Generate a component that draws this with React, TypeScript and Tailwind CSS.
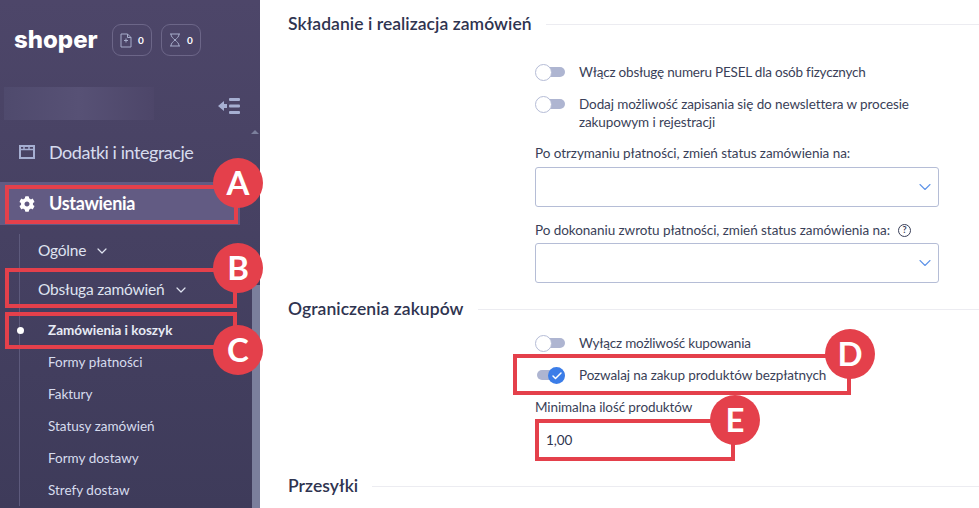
import { Check, ChevronDown } from 'lucide-react';
import { FaCog } from 'react-icons/fa';

const font = { fontFamily: 'Lato, "Noto Sans", sans-serif' };

function Toggle({ on = false }: { on?: boolean }) {
  return (
    <span className="relative mt-[1px] block h-[17px] w-[30px] shrink-0">
      <span className="absolute left-[2px] right-0 top-[3px] h-[10px] rounded-full bg-[#aeb5d1]" />
      {on ? (
        <span className="absolute right-0 top-0 flex h-[17px] w-[17px] items-center justify-center rounded-full bg-[#3b7de8]">
          <Check size={12} strokeWidth={3} className="text-white" />
        </span>
      ) : (
        <span className="absolute left-0 top-0 h-[17px] w-[17px] rounded-full border border-[#b5bcd6] bg-white" />
      )}
    </span>
  );
}

function Heading({ title }: { title: string }) {
  return (
    <div className="flex items-center">
      <h2 className="mr-[14px] text-[17.5px] leading-[24px] font-semibold tracking-[0.05px] text-[#2f3450]">{title}</h2>
      <div className="h-px flex-1 bg-[#ececf1]" />
    </div>
  );
}

function SelectBox() {
  return (
    <div className="flex h-[40px] w-[404px] items-center justify-end rounded-[3px] border border-[#b5bdd6] bg-white pr-[3px]">
      <ChevronDown size={20} strokeWidth={1.3} className="text-[#5f94e8]" />
    </div>
  );
}

function Mark({ letter, className }: { letter: string; className: string }) {
  return (
    <div className={`absolute flex h-[50px] w-[50px] items-center justify-center rounded-full bg-[#e4404b] text-[33px] font-bold text-white ${className}`}>
      {letter}
    </div>
  );
}

function Frame({ className }: { className: string }) {
  return <div className={`absolute border-[4px] border-[#e4404b] ${className}`} />;
}

export default function App() {
  const subItems = ['Formy płatności', 'Faktury', 'Statusy zamówień', 'Formy dostawy', 'Strefy dostaw'];

  return (
    <div className="relative flex h-[508px] w-[979px] overflow-hidden bg-white" style={font}>
      {/* sidebar */}
      <aside className="relative flex h-full w-[260px] shrink-0 flex-col overflow-hidden bg-gradient-to-b from-[#4d4669] to-[#3e3b5a]">
        <div className="flex h-[87px] items-start pl-[14px] pt-[24px]">
          <span className="mt-[1px] w-[98px] text-[24px] leading-[30px] font-extrabold text-white" style={{ fontFamily: 'Inter, sans-serif' }}>
            shoper
          </span>
          <div className="flex h-[32px] w-[40px] items-center justify-center gap-[6px] rounded-[9px] border border-[#6c6688]">
            <svg width="12" height="15" viewBox="0 0 12 15" fill="none" stroke="#a6acca" strokeWidth="1">
              <path d="M1 1h6.5L11 4.5V14H1z" />
              <path d="M7.5 1v3.5H11M6 5.5v4M4 7.5h4" />
            </svg>
            <span className="text-[10px] font-bold text-white">0</span>
          </div>
          <div className="ml-[9px] flex h-[32px] w-[40px] items-center justify-center gap-[6px] rounded-[9px] border border-[#6c6688]">
            <svg width="12" height="14" viewBox="0 0 12 14" fill="none" stroke="#a6acca" strokeWidth="1">
              <path d="M1 1h10M1 13h10M2 1c0 3 2 4 4 6 2-2 4-3 4-6M2 13c0-3 2-4 4-6 2 2 4 3 4 6" />
            </svg>
            <span className="text-[10px] font-bold text-white">0</span>
          </div>
        </div>

        <div className="flex h-[33px] items-center">
          <div className="ml-[4px] h-full w-[150px] bg-gradient-to-r from-[#4f4a6d] via-[#575175] to-[#4d4669]" />
          <svg className="ml-[64px] mt-[4px]" width="22" height="16" viewBox="0 0 22 16" fill="#a6afd2">
            <path d="M0 8l6-5v3h3v4H6v3z" />
            <rect x="11" y="0" width="11" height="3" rx="1" />
            <rect x="11" y="6.5" width="11" height="3" rx="1" />
            <rect x="11" y="13" width="11" height="3" rx="1" />
          </svg>
        </div>

        <nav className="mt-[12px] flex flex-col">
          <div className="flex h-[40px] items-center pl-[19px] text-[18px] tracking-[-0.45px] text-[#d7dcee]">
            <svg className="mr-[14px]" width="16" height="14" viewBox="0 0 16 14" fill="none" stroke="#a6afd2" strokeWidth="2">
              <rect x="1" y="1" width="14" height="12" />
              <path d="M1 4.5h14M5 1v3.5M10 1v3.5" strokeWidth="1.5" />
            </svg>
            Dodatki i integracje
          </div>

          <div className="mt-[10px] flex h-[43px] w-[240px] items-center bg-[#625b83] pl-[19px] text-[18px] font-bold tracking-[-0.3px] text-white">
            <FaCog size={16} className="mr-[14px] text-white" />
            Ustawienia
          </div>

          <div className="ml-[19px] mt-[9px] flex flex-col border-l border-[#5d5a7c]">
            <div className="flex h-[34px] items-center gap-[8px] pl-[18px] text-[15.5px] tracking-[-0.2px] text-[#dfe3f0]">
              Ogólne <ChevronDown size={16} strokeWidth={1.8} />
            </div>
            <div className="mt-[5px] flex h-[34px] items-center gap-[9px] pl-[18px] text-[15.5px] tracking-[-0.2px] text-[#dfe3f0]">
              Obsługa zamówień <ChevronDown size={16} strokeWidth={1.8} />
            </div>
            <div className="relative mt-[7px] flex h-[32px] items-center pl-[28px] text-[13.5px] font-bold text-[#e8ebf5]">
              <span className="absolute left-[-3px] top-[13px] h-[7px] w-[7px] rounded-full bg-white" />
              Zamówienia i koszyk
            </div>
            {subItems.map((item) => (
              <div key={item} className="flex h-[32px] items-center pl-[28px] text-[13.5px] text-[#d7dcee]">
                {item}
              </div>
            ))}
          </div>
        </nav>

        {/* scrollbar */}
        <div className="absolute right-[1px] top-[130px] h-0 w-0 border-x-[4px] border-b-[4px] border-x-transparent border-b-[#7b7f9c]" />
        <div className="absolute bottom-0 right-0 top-[285px] w-[8px] bg-[#7b7f9c]" />
      </aside>

      {/* content */}
      <main className="flex-1 pl-[28px] pt-[12px] text-[13.5px] tracking-[-0.05px] text-[#3a3f58]">
        <Heading title="Składanie i realizacja zamówień" />

        <div className="ml-[247px] mt-[26px] flex flex-col">
          <label className="flex h-[20px] items-center gap-[14px]">
            <Toggle />
            <span className="tracking-[-0.2px]">Włącz obsługę numeru PESEL dla osób fizycznych</span>
          </label>
          <label className="mt-[13px] flex items-start gap-[14px] leading-[18px]">
            <Toggle />
            <span className="w-[350px] tracking-[-0.1px]">Dodaj możliwość zapisania się do newslettera w procesie zakupowym i rejestracji</span>
          </label>
          <div className="mt-[13px] h-[18px] leading-[18px]">Po otrzymaniu płatności, zmień status zamówienia na:</div>
          <div className="mt-[5px]"><SelectBox /></div>
          <div className="mt-[14px] flex h-[18px] items-center gap-[8px] leading-[18px]">
            Po dokonaniu zwrotu płatności, zmień status zamówienia na:
            <span className="flex h-[13px] w-[13px] items-center justify-center rounded-full border border-[#3a3f58] text-[9px] font-bold">?</span>
          </div>
          <div className="mt-[4px]"><SelectBox /></div>
        </div>

        <div className="mt-[14px]">
          <Heading title="Ograniczenia zakupów" />
        </div>

        <div className="ml-[247px] mt-[12px] flex flex-col">
          <label className="flex h-[20px] items-center gap-[14px]">
            <Toggle />
            <span className="tracking-[-0.2px]">Wyłącz możliwość kupowania</span>
          </label>
          <label className="mt-[12px] flex h-[20px] items-center gap-[14px]">
            <Toggle on />
            <span className="tracking-[-0.1px]">Pozwalaj na zakup produktów bezpłatnych</span>
          </label>
          <div className="mt-[13px] h-[18px] leading-[18px] tracking-[-0.1px]">Minimalna ilość produktów</div>
          <div className="mt-[6px] flex h-[36px] w-[200px] items-center pl-[11px] text-[#2f3450]">1,00</div>
        </div>

        <div className="mt-[16px]">
          <Heading title="Przesyłki" />
        </div>
      </main>

      {/* annotations */}
      <Frame className="left-[5px] top-[185px] h-[39px] w-[233px]" />
      <Frame className="left-[5px] top-[268px] h-[40px] w-[232px]" />
      <Frame className="left-[5px] top-[312px] h-[37px] w-[232px]" />
      <Frame className="left-[513px] top-[354px] h-[41px] w-[338px]" />
      <Frame className="left-[535px] top-[419px] h-[42px] w-[200px]" />
      <Mark letter="A" className="left-[213px] top-[158px]" />
      <Mark letter="B" className="left-[213px] top-[243px]" />
      <Mark letter="C" className="left-[213px] top-[325px]" />
      <Mark letter="D" className="left-[825px] top-[329px]" />
      <Mark letter="E" className="left-[710px] top-[395px]" />
    </div>
  );
}
